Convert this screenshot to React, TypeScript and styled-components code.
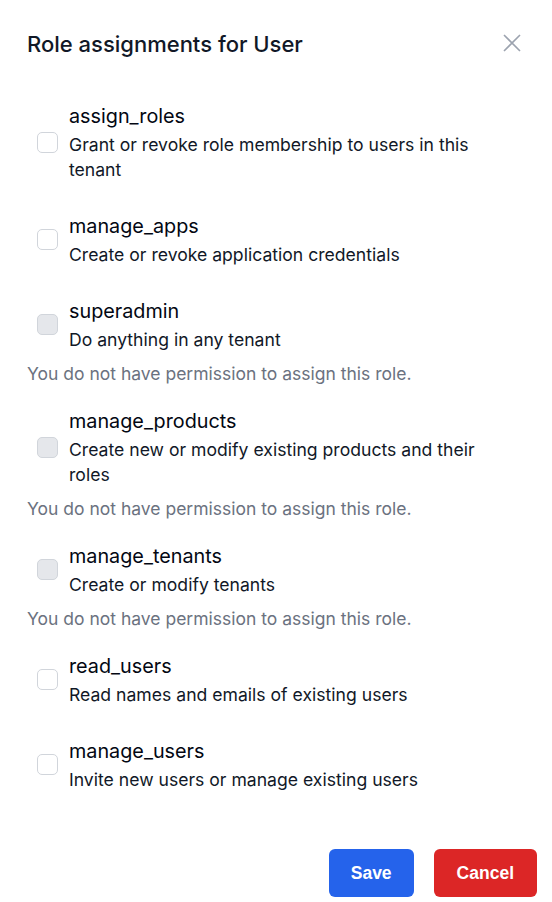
import React from "react";
import styled, { createGlobalStyle } from "styled-components";

const GlobalStyle = createGlobalStyle`
  html, body {
    margin: 0;
    padding: 0;
    background: #ffffff;
  }
  body {
    font-family: Inter, "Noto Sans", sans-serif;
    color: #111827;
  }
`;

const Dialog = styled.div`
  width: 552px;
  min-height: 902px;
  box-sizing: border-box;
  display: flex;
  flex-direction: column;
`;

const Header = styled.header`
  display: flex;
  justify-content: space-between;
  align-items: flex-start;
  padding: 30px 31px 0 27px;
`;

const Title = styled.h2`
  margin: 0;
  font-size: 22px;
  line-height: 28px;
  font-weight: 500;
  color: #111827;
`;

const CloseButton = styled.button`
  border: none;
  background: none;
  padding: 0;
  margin-top: 4px;
  width: 18px;
  height: 18px;
  color: #9ca3af;
  cursor: pointer;
  display: flex;
`;

const RoleList = styled.ul`
  list-style: none;
  margin: 28px 0 0;
  padding: 0 38px 0 27px;
`;

type ItemProps = { $warned: boolean };
const RoleItem = styled.li<ItemProps>`
  padding: 16px 0 ${({ $warned }) => ($warned ? "4px" : "14px")};
`;

const RoleRow = styled.label`
  display: flex;
  align-items: center;
  gap: 11px;
  padding-left: 10px;
`;

type BoxProps = { $disabled: boolean };
const Box = styled.span<BoxProps>`
  flex: none;
  width: 21px;
  height: 21px;
  box-sizing: border-box;
  border-radius: 5px;
  border: 1px solid #d1d5db;
  background: ${({ $disabled }) => ($disabled ? "#e5e7eb" : "#ffffff")};
`;

const RoleText = styled.div`
  display: flex;
  flex-direction: column;
`;

const RoleName = styled.span`
  font-size: 19.8px;
  line-height: 28px;
  color: #030712;
`;

const RoleDesc = styled.span`
  margin-top: 2px;
  font-size: 17.6px;
  line-height: 25px;
  color: #111827;
`;

const Warning = styled.p`
  margin: 9px 0 0;
  font-size: 17.5px;
  line-height: 26px;
  color: #6b7280;
`;

const Footer = styled.footer`
  display: flex;
  justify-content: flex-end;
  gap: 20px;
  padding: 43px 15px 0 0;
`;

type ButtonProps = { $tone: "save" | "cancel" };
const ActionButton = styled.button<ButtonProps>`
  height: 48px;
  padding: 0 ${({ $tone }) => ($tone === "save" ? "22px" : "23px")};
  border: none;
  border-radius: 6px;
  font-family: "Liberation Sans", Arial, sans-serif;
  font-weight: 700;
  font-size: 17.5px;
  color: #ffffff;
  background: ${({ $tone }) => ($tone === "save" ? "#2563eb" : "#dc2626")};
  cursor: pointer;
`;

type Role = {
  name: string;
  description: string;
  allowed: boolean;
};

const roles: Role[] = [
  {
    name: "assign_roles",
    description: "Grant or revoke role membership to users in this tenant",
    allowed: true,
  },
  {
    name: "manage_apps",
    description: "Create or revoke application credentials",
    allowed: true,
  },
  { name: "superadmin", description: "Do anything in any tenant", allowed: false },
  {
    name: "manage_products",
    description: "Create new or modify existing products and their roles",
    allowed: false,
  },
  { name: "manage_tenants", description: "Create or modify tenants", allowed: false },
  {
    name: "read_users",
    description: "Read names and emails of existing users",
    allowed: true,
  },
  {
    name: "manage_users",
    description: "Invite new users or manage existing users",
    allowed: true,
  },
];

function CloseIcon() {
  return (
    <svg width="18" height="18" viewBox="0 0 18 18" fill="none" stroke="currentColor" strokeWidth="1.6">
      <path d="M1 1L17 17M17 1L1 17" />
    </svg>
  );
}

function App() {
  return (
    <>
      <GlobalStyle />
      <Dialog>
        <Header>
          <Title>Role assignments for User</Title>
          <CloseButton type="button" aria-label="Close">
            <CloseIcon />
          </CloseButton>
        </Header>
        <RoleList>
          {roles.map((role) => (
            <RoleItem key={role.name} $warned={!role.allowed}>
              <RoleRow>
                <Box $disabled={!role.allowed} />
                <RoleText>
                  <RoleName>{role.name}</RoleName>
                  <RoleDesc>{role.description}</RoleDesc>
                </RoleText>
              </RoleRow>
              {!role.allowed && (
                <Warning>You do not have permission to assign this role.</Warning>
              )}
            </RoleItem>
          ))}
        </RoleList>
        <Footer>
          <ActionButton type="button" $tone="save">
            Save
          </ActionButton>
          <ActionButton type="button" $tone="cancel">
            Cancel
          </ActionButton>
        </Footer>
      </Dialog>
    </>
  );
}

export default App;
